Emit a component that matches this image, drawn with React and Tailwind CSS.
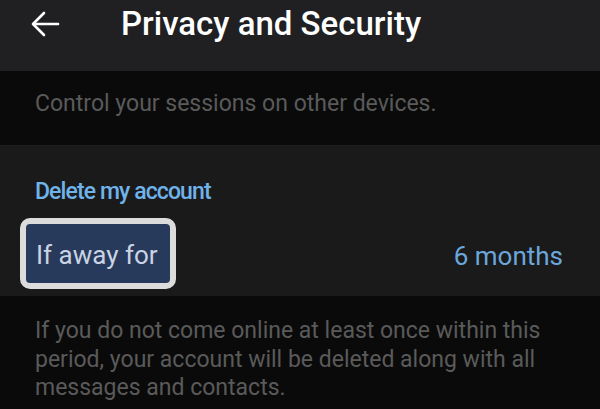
export default function App() {
  return (
    <div className="w-[600px] h-[409px] overflow-hidden bg-[#0a0a0a] font-['Roboto',sans-serif]">
      {/* header */}
      <div className="h-[71px] bg-[#202022] flex items-start">
        <div className="w-[121px] flex pl-[31px] pt-[11px]">
          <svg width="29" height="26" viewBox="0 0 29 26" fill="none" stroke="white" strokeWidth="2.6" strokeLinecap="round" strokeLinejoin="round">
            <path d="M27 13H3" />
            <path d="M13 2L2 13L13 24" />
          </svg>
        </div>
        <h1 className="pt-[5px] text-[33px] leading-[38px] font-medium text-white">Privacy and Security</h1>
      </div>

      {/* sessions hint */}
      <div className="h-[75px] border-b border-[#1e1e1e] px-[35px] pt-[19px]">
        <p className="text-[23px] leading-[28px] text-[#5a5a5a]">Control your sessions on other devices.</p>
      </div>

      {/* delete my account */}
      <div className="h-[150px] bg-[#1a1a1a] pt-[32px]">
        <h2 className="px-[35px] text-[23px] leading-[28px] font-medium tracking-[-0.9px] text-[#6fb3ea]">Delete my account</h2>
        <div className="flex items-center justify-between mt-[12px] pl-[20px] pr-[37px]">
          <div className="h-[71px] w-[156px] rounded-[10px] bg-[#dcdcdc] p-[6px]">
            <div className="h-full w-full rounded-[4px] bg-[#283a5c] flex items-center pl-[10px] pt-[3px]">
              <span className="text-[26px] leading-[30px] text-[#c9d3e3]">If away for</span>
            </div>
          </div>
          <span className="pt-[5px] text-[26px] leading-[30px] text-[#6ba7dc]">6 months</span>
        </div>
      </div>

      {/* explanation */}
      <div className="px-[35px] pt-[21px]">
        <p className="text-[23px] leading-[28.5px] text-[#5a5a5a] whitespace-nowrap">
          <span className="block">If you do not come online at least once within this</span>
          <span className="block">period, your account will be deleted along with all</span>
          <span className="block">messages and contacts.</span>
        </p>
      </div>
    </div>
  );
}
